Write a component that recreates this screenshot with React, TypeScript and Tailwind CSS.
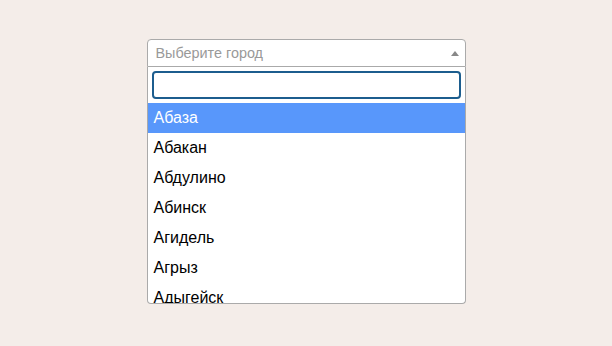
const cities = ['Абаза', 'Абакан', 'Абдулино', 'Абинск', 'Агидель', 'Агрыз', 'Адыгейск']

export default function App() {
  return (
    <div
      className="flex h-[346px] w-[612px] justify-center bg-[#f4ede9] pt-[39px]"
      style={{ fontFamily: '"Liberation Sans", Arial, sans-serif' }}
    >
      <div className="w-[319px]">
        {/* Selection */}
        <div className="relative flex h-[28px] items-center rounded-t-[4px] border border-[#aaa] bg-white pl-[8px]">
          <span className="text-[14.4px] leading-[26px] text-[#999]">Выберите город</span>
          <span className="absolute right-[6px] top-[11px] h-0 w-0 border-x-[4px] border-b-[5px] border-x-transparent border-b-[#888]" />
        </div>

        {/* Dropdown */}
        <div className="rounded-b-[4px] border border-t-0 border-[#aaa] bg-white">
          <div className="p-[4px]">
            <div className="h-[28px] w-full rounded-[4px] border-2 border-[#1c5d8e] bg-white" />
          </div>
          <ul className="h-[200px] overflow-hidden">
            {cities.map((c, i) => (
              <li
                key={c}
                className={`px-[6px] py-[6px] text-[16px] leading-[18px] ${
                  i === 0 ? 'bg-[#5897fb] text-white' : 'text-black'
                }`}
              >
                {c}
              </li>
            ))}
          </ul>
        </div>
      </div>
    </div>
  )
}
